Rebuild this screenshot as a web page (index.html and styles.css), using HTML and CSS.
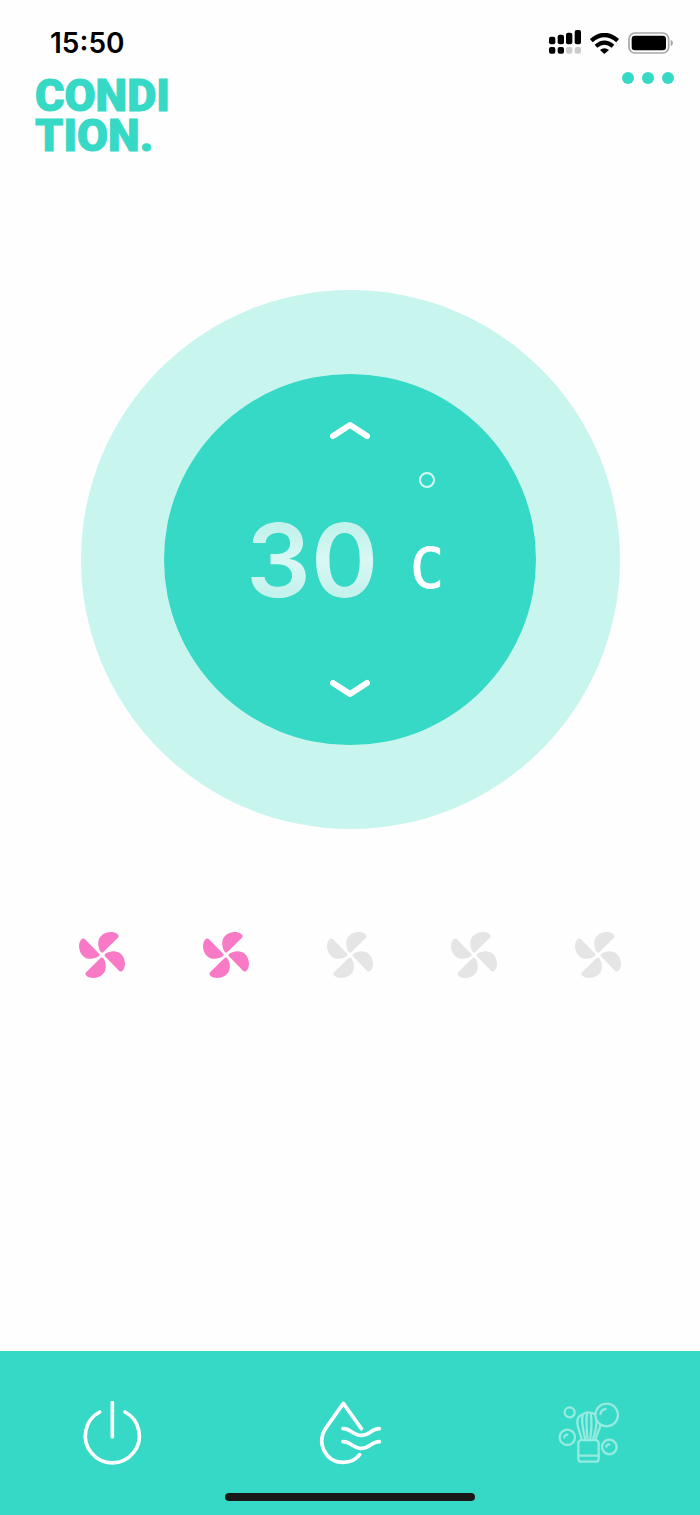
FILE: index.html
```
<!DOCTYPE html>
<html lang="en">
<head>
    <meta charset="utf-8">
    <meta name="viewport" content="width=device-width, initial-scale=1">
    <title>Condition</title>
    <link rel="stylesheet" href="styles.css">
</head>
<body>
    <div class="status-bar">
        <span class="time">15:50</span>
        <div class="status-icons">
            <svg class="signal" viewBox="0 0 96 72" aria-hidden="true">
                <rect x="0" y="20" width="19" height="23" rx="6"/>
                <rect x="26" y="14" width="19" height="29" rx="6"/>
                <rect x="51" y="8" width="19" height="35" rx="6"/>
                <rect x="77" y="0" width="19" height="43" rx="6"/>
                <rect x="0" y="51" width="19" height="20" rx="6"/>
                <rect x="26" y="51" width="19" height="20" rx="6"/>
                <rect class="weak" x="51" y="51" width="19" height="20" rx="6"/>
                <rect class="weak" x="77" y="51" width="19" height="20" rx="6"/>
            </svg>
            <svg class="wifi" viewBox="0 0 87 63" aria-hidden="true">
                <path d="M4 23 Q43 -11 83 23" fill="none" stroke="#000" stroke-width="13"/>
                <path d="M18 40 Q43 18 69 40" fill="none" stroke="#000" stroke-width="12"/>
                <path d="M30 51 Q43 40 57 51 L43 63 Z"/>
            </svg>
            <svg class="battery" viewBox="0 0 135 66" aria-hidden="true">
                <rect x="3" y="3" width="119" height="60" rx="18" fill="none" stroke="#a6a6a6" stroke-width="5"/>
                <rect x="11" y="11" width="103" height="44" rx="10"/>
                <path d="M128 23 Q135 26 135 33 Q135 40 128 43 Z" fill="#a6a6a6"/>
            </svg>
        </div>
    </div>

    <header class="header">
        <h1 class="logo">CONDI<br>TION.</h1>
        <button class="menu-button" type="button" aria-label="Menu">
            <span class="dot"></span>
            <span class="dot"></span>
            <span class="dot"></span>
        </button>
    </header>

    <main class="main">
        <div class="dial">
            <div class="dial-inner">
                <button class="arrow" type="button" aria-label="Warmer">
                    <svg viewBox="0 0 40 20" aria-hidden="true"><path d="M3 15 L20 4 L37 15"/></svg>
                </button>
                <div class="reading">
                    <span class="number">30</span>
                    <span class="unit">
                        <span class="degree"></span>
                        <span class="scale">C</span>
                    </span>
                </div>
                <button class="arrow" type="button" aria-label="Colder">
                    <svg viewBox="0 0 40 20" aria-hidden="true"><path d="M3 5 L20 16 L37 5"/></svg>
                </button>
            </div>
        </div>

        <!-- fan speed, one button for each level -->
        <svg class="defs" aria-hidden="true">
            <defs>
                <path id="blade" d="M5 -10 Q0 -5 -4 -10 C-13 -22 -15 -46 -3 -57 C9 -70 33 -73 46 -63 Q53 -57 47 -51 Z"/>
                <g id="fan">
                    <use href="#blade"/>
                    <use href="#blade" transform="rotate(90)"/>
                    <use href="#blade" transform="rotate(180)"/>
                    <use href="#blade" transform="rotate(270)"/>
                </g>
            </defs>
        </svg>
        <div class="fans">
            <button class="fan on" type="button" aria-label="Speed 1"><svg viewBox="-69 -69 138 138"><use href="#fan"/></svg></button>
            <button class="fan on" type="button" aria-label="Speed 2"><svg viewBox="-69 -69 138 138"><use href="#fan"/></svg></button>
            <button class="fan" type="button" aria-label="Speed 3"><svg viewBox="-69 -69 138 138"><use href="#fan"/></svg></button>
            <button class="fan" type="button" aria-label="Speed 4"><svg viewBox="-69 -69 138 138"><use href="#fan"/></svg></button>
            <button class="fan" type="button" aria-label="Speed 5"><svg viewBox="-69 -69 138 138"><use href="#fan"/></svg></button>
        </div>
    </main>

    <footer class="footer">
        <div class="modes">
            <button class="mode" type="button" aria-label="Power">
                <svg viewBox="31 48 192 192" aria-hidden="true">
                    <path d="M90 81 A81 81 0 1 0 166 81"/>
                    <path d="M128 53 V156"/>
                </svg>
            </button>
            <button class="mode" type="button" aria-label="Dry">
                <svg viewBox="38 48 192 192" aria-hidden="true">
                    <path d="M168 131 L114 55 L63 127 C48 149 45 172 55 194 C67 220 89 232 114 232 C134 232 151 225 163 209"/>
                    <path d="M113 131 C134 129 143 151 168 151 C194 151 197 131 222 131"/>
                    <path d="M113 170 C134 168 143 190 168 190 C194 190 197 170 222 170"/>
                </svg>
            </button>
            <button class="mode dim" type="button" aria-label="Clean">
                <svg viewBox="32 48 192 192" aria-hidden="true">
                    <circle cx="73" cy="82" r="15"/>
                    <circle cx="184" cy="90" r="34"/>
                    <path d="M165 87 Q168 74 181 72"/>
                    <circle cx="66" cy="157" r="23"/>
                    <path d="M57 157 Q58 149 66 149"/>
                    <circle cx="192" cy="186" r="22"/>
                    <path d="M183 185 Q184 178 192 178"/>
                    <path d="M108 159 C105 142 95 130 96 110 C96 98 102 92 111 89 C120 80 137 80 148 88"/>
                    <path d="M152 159 C155 145 163 135 165 121"/>
                    <path d="M119 159 C114 138 107 111 112 90"/>
                    <path d="M126 159 C125 138 121 104 125 86"/>
                    <path d="M135 159 C138 138 140 106 136 85"/>
                    <path d="M144 159 C149 142 155 124 153 107"/>
                    <path d="M106 165 Q99 167 99 177 V221 Q99 230 108 230 H151 Q160 230 160 221 V177 Q160 167 153 165 Z"/>
                    <path d="M101 212 H158"/>
                </svg>
            </button>
        </div>
        <div class="home-bar"></div>
    </footer>
</body>
</html>
```

FILE: styles.css
```
* {
    box-sizing: border-box;
}

body {
    margin: 0;
    min-height: 100vh;
    display: flex;
    flex-direction: column;
    background-color: #fefefe;
    font-family: Inter, "Liberation Sans", sans-serif;
}

button {
    padding: 0;
    border: none;
    background: none;
    cursor: pointer;
}

svg {
    display: block;
}

/* Status bar */
.status-bar {
    display: flex;
    justify-content: space-between;
    align-items: center;
    padding: 28px 27px 0 50px;
    height: 58px;
}

.time {
    font-size: 28px;
    font-weight: 600;
    line-height: 30px;
}

.status-icons {
    display: flex;
    align-items: center;
    gap: 9px;
    height: 28px;
}

.signal {
    width: 32px;
    height: 24px;
    margin-bottom: 3px;
}

.signal .weak {
    fill: #ccc;
}

.wifi {
    width: 29px;
    height: 21px;
}

.battery {
    width: 45px;
    height: 22px;
}

/* Header */
.header {
    display: flex;
    justify-content: space-between;
    align-items: flex-start;
    padding: 14px 26px 0 35px;
}

.logo {
    margin: 0;
    padding-top: 4px;
    font-family: Roboto, "Liberation Sans", sans-serif;
    font-size: 45px;
    font-weight: 900;
    line-height: 40px;
    color: #35d9c5;
    -webkit-text-stroke: 1px #35d9c5;
}

.menu-button {
    display: flex;
    gap: 8px;
}

.dot {
    width: 12px;
    height: 12px;
    border-radius: 50%;
    background-color: #35d9c5;
}

/* Dial */
.main {
    flex: 1;
    padding-top: 134px;
}

.dial {
    display: flex;
    justify-content: center;
    align-items: center;
    width: 77%;
    margin: 0 auto;
    aspect-ratio: 1;
    border-radius: 50%;
    background-color: #c9f5ef;
}

.dial-inner {
    display: flex;
    flex-direction: column;
    justify-content: space-between;
    align-items: center;
    width: 69%;
    aspect-ratio: 1;
    padding: 47px 0;
    border-radius: 50%;
    background-color: #35d9c5;
}

.arrow svg {
    width: 40px;
    height: 20px;
    fill: none;
    stroke: #fff;
    stroke-width: 6;
    stroke-linecap: round;
    stroke-linejoin: round;
}

.reading {
    display: flex;
    align-items: center;
    gap: 32px;
    padding-right: 10px;
}

.number {
    font-size: 102px;
    font-weight: 600;
    line-height: 104px;
    color: transparent;
    background: linear-gradient(#c4f2ec 20%, #d9f8f4 50%, #c4f2ec 82%);
    background-clip: text;
    -webkit-background-clip: text;
}

.unit {
    display: flex;
    flex-direction: column;
    align-items: center;
    gap: 48px;
    height: 176px;
}

.degree {
    width: 16px;
    height: 16px;
    border: 2px solid #d9f8f4;
    border-radius: 50%;
}

.scale {
    font-family: "DejaVu Sans Mono", monospace;
    font-size: 56px;
    line-height: 64px;
    color: #fff;
    -webkit-text-stroke: 1px #fff;
}

/* Fan speed */
.defs {
    width: 0;
    height: 0;
}

.fans {
    display: grid;
    grid-template-columns: repeat(5, 1fr);
    justify-items: center;
    margin: 103px 40px 0;
}

.fan svg {
    width: 46px;
    height: 46px;
    fill: #e5e5e5;
}

.fan.on svg {
    fill: #f879c6;
}

/* Bottom bar */
.footer {
    display: flex;
    flex-direction: column;
    justify-content: space-between;
    align-items: center;
    height: 164px;
    padding: 50px 80px 14px;
    background-color: #35d9c5;
}

.modes {
    display: flex;
    justify-content: space-between;
    width: 100%;
}

.mode svg {
    width: 64px;
    height: 64px;
    fill: none;
    stroke: #fff;
    stroke-width: 11;
    stroke-linecap: round;
    stroke-linejoin: round;
}

.mode.dim svg {
    stroke: #96eae0;
    stroke-width: 7;
}

.home-bar {
    width: 250px;
    height: 8px;
    border-radius: 4px;
    background-color: #191919;
}
```
